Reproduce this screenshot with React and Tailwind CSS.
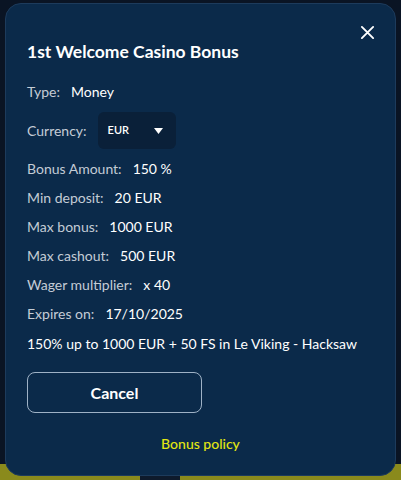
import React, { useState } from "react";

const rows = [
  ["Bonus Amount:", "150 %"],
  ["Min deposit:", "20 EUR"],
  ["Max bonus:", "1000 EUR"],
  ["Max cashout:", "500 EUR"],
  ["Wager multiplier:", "x 40"],
  ["Expires on:", "17/10/2025"],
];

export default function App() {
  const [currency] = useState("EUR");

  return (
    <div
      className="relative w-[401px] h-[480px] overflow-hidden bg-[#0a1424]"
      style={{ fontFamily: "Lato, 'Noto Sans', sans-serif" }}
    >
      {/* page behind the dialog */}
      <div className="absolute left-0 right-0 bottom-0 h-[16px] flex">
        <div className="w-[140px] bg-[#8a8a1c]" />
        <div className="w-[40px] bg-[#0e1a2c]" />
        <div className="flex-1 bg-[#8a8a1c]" />
      </div>

      <div className="relative mx-[5px] mt-[3px] h-[473px] rounded-[16px] border border-[#1d3b5c] bg-[#0b2a4a] px-[21px] pt-[36px] text-white">
        <button className="absolute right-[20px] top-[21px] text-white">
          <svg width="15" height="15" viewBox="0 0 16 16" fill="none" stroke="currentColor" strokeWidth="2" strokeLinecap="round">
            <path d="M2 2l12 12M14 2L2 14" />
          </svg>
        </button>

        <h2 className="text-[17.5px] font-bold leading-[24px]">
          1st Welcome Casino Bonus
        </h2>

        <div className="mt-[18px] flex items-center gap-[11px] text-[14px] leading-[20px]">
          <span className="text-[#c4ccd6]">Type:</span>
          <span>Money</span>
        </div>

        <div className="mt-[10px] flex items-center gap-[11px] text-[14px]">
          <span className="text-[#c4ccd6]">Currency:</span>
          <div className="flex h-[37px] w-[78px] items-center justify-between rounded-[6px] bg-[#0a2039] pl-[10px] pr-[13px]">
            <span className="text-[11px] font-semibold">{currency}</span>
            <svg width="9" height="6" viewBox="0 0 9 6" fill="currentColor">
              <path d="M0 0h9L4.5 6z" />
            </svg>
          </div>
        </div>

        <div className="mt-[5px] flex flex-col">
          {rows.map(([label, value]) => (
            <div key={label} className="flex h-[29px] items-center gap-[11px] text-[14px]">
              <span className="text-[#c4ccd6]">{label}</span>
              <span>{value}</span>
            </div>
          ))}
        </div>

        <p className="mt-[6px] text-[14px] leading-[20px]">
          150% up to 1000 EUR + 50 FS in Le Viking - Hacksaw
        </p>

        <button className="mt-[18px] flex h-[41px] w-[175px] items-center justify-center rounded-[8px] border border-[#9fb2c6] text-[16px] font-bold">
          Cancel
        </button>

        <div className="mt-[20px] text-center text-[14px] font-medium text-[#e2e612]">
          Bonus policy
        </div>
      </div>
    </div>
  );
}
